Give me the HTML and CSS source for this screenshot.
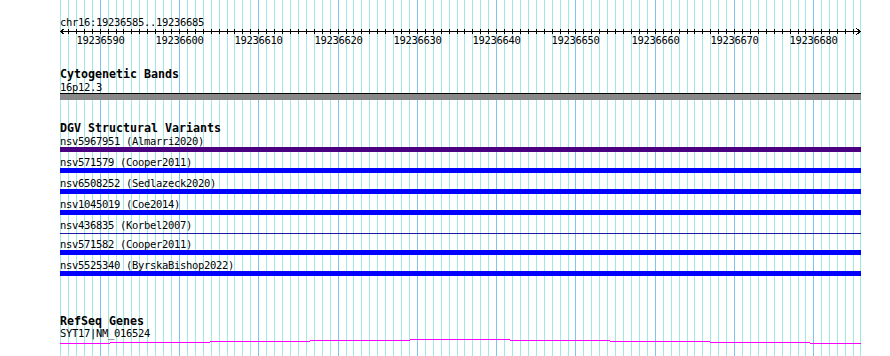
FILE: index.html
```html
<!DOCTYPE html>
<html lang="en">
<head>
    <meta charset="UTF-8">
    <meta name="viewport" content="width=device-width, initial-scale=1.0">
    <title>chr16:19236585..19236685</title>
    <link rel="stylesheet" href="styles.css">
</head>
<body>
    <div class="browser">
        <!-- base grid, filled in by script.js -->
        <svg class="grid" id="grid" width="801" height="356"></svg>

        <div class="tracks">
            <!-- Ruler -->
            <div class="ruler">
                <div class="label">chr16:19236585..19236685</div>
                <svg class="axis" id="axis" width="801" height="20"></svg>
            </div>

            <!-- Cytogenetic Bands -->
            <div class="track cyto">
                <div class="track-title">Cytogenetic Bands</div>
                <div class="label">16p12.3</div>
                <div class="band"></div>
            </div>

            <!-- DGV Structural Variants -->
            <div class="track dgv">
                <div class="track-title">DGV Structural Variants</div>
                <div class="feature">
                    <div class="label">nsv5967951 (Almarri2020)</div>
                    <div class="bar purple"></div>
                </div>
                <div class="feature">
                    <div class="label">nsv571579 (Cooper2011)</div>
                    <div class="bar"></div>
                </div>
                <div class="feature">
                    <div class="label">nsv6508252 (Sedlazeck2020)</div>
                    <div class="bar"></div>
                </div>
                <div class="feature">
                    <div class="label">nsv1045019 (Coe2014)</div>
                    <div class="bar"></div>
                </div>
                <div class="feature">
                    <div class="label">nsv436835 (Korbel2007)</div>
                    <div class="bar thin"></div>
                </div>
                <div class="feature">
                    <div class="label">nsv571582 (Cooper2011)</div>
                    <div class="bar"></div>
                </div>
                <div class="feature">
                    <div class="label">nsv5525340 (ByrskaBishop2022)</div>
                    <div class="bar"></div>
                </div>
            </div>

            <!-- RefSeq Genes -->
            <div class="track refseq">
                <div class="track-title">RefSeq Genes</div>
                <div class="label gene-label">SYT17|NM_016524</div>
                <svg class="gene" width="801" height="15" shape-rendering="crispEdges">
                    <rect x="0" y="4" width="50" height="1" />
                    <rect x="50" y="3" width="100" height="1" />
                    <rect x="150" y="2" width="100" height="1" />
                    <rect x="250" y="1" width="100" height="1" />
                    <rect x="350" y="0" width="100" height="1" />
                    <rect x="450" y="1" width="100" height="1" />
                    <rect x="550" y="2" width="100" height="1" />
                    <rect x="650" y="3" width="100" height="1" />
                    <rect x="750" y="4" width="51" height="1" />
                </svg>
            </div>
        </div>
    </div>

    <script src="script.js"></script>
</body>
</html>
```

FILE: styles.css
```css
body {
    margin: 0;
    padding: 0;
    background: #ffffff;
    font-family: "DejaVu Sans Mono", "Liberation Mono", monospace;
    color: #000;
}

.browser {
    position: relative;
    width: 890px;
    height: 356px;
    overflow: hidden;
}

/* grid sits behind every track */
.grid {
    position: absolute;
    top: 0;
    left: 60px;
}

.grid .minor {
    fill: #9ee8e8;
}

.grid .major {
    fill: #7cc4f2;
}

.tracks {
    position: relative;
    width: 801px;
    padding-left: 60px;
}

/* 6px cells like the small bitmap font */
.label {
    font-size: 10.5px;
    letter-spacing: -0.32px;
    line-height: 12px;
    height: 12px;
    white-space: pre;
}

/* 7px cells like the medium bold font */
.track-title {
    font-size: 11.63px;
    font-weight: bold;
    line-height: 13px;
    height: 13px;
}

/* Ruler */
.ruler {
    padding-top: 16px;
}

.axis {
    display: block;
}

.axis .line,
.axis .tick {
    fill: #000;
}

.axis .arrow {
    fill: none;
    stroke: #000;
    stroke-width: 1;
}

.axis text {
    font-family: "DejaVu Sans Mono", monospace;
    font-size: 10.5px;
    letter-spacing: -0.32px;
    fill: #000;
}

/* Cytogenetic Bands */
.cyto {
    margin-top: 20px;
}

.band {
    height: 6px;
    border-top: 1px solid #000;
    background: #888888;
}

/* DGV Structural Variants */
.dgv {
    margin-top: 22px;
}

.feature + .feature {
    margin-top: 4px;
}

.bar {
    height: 5px;
    background: #0000ff;
}

.bar.purple {
    background: #4b0082;
}

.bar.thin {
    height: 1px;
    margin: 2px 0;
    background: #1a1aa6;
}

/* RefSeq Genes */
.refseq {
    margin-top: 39px;
}

.gene-label {
    line-height: 11px;
    height: 11px;
}

.gene {
    display: block;
    fill: #ff00ff;
}
```

FILE: script.js
```js
// base grid + ruler for chr16:19236585..19236685
const START = 19236585;
const BASES = 101;
const WIDTH = 801;
const SVG_NS = 'http://www.w3.org/2000/svg';
const step = WIDTH / BASES;

function el(name, attrs, text) {
    const node = document.createElementNS(SVG_NS, name);
    for (const key in attrs) node.setAttribute(key, attrs[key]);
    if (text) node.textContent = text;
    return node;
}

function xAt(k) {
    return Math.min(Math.round(k * step), WIDTH - 1);
}

// vertical lines, darker every 10 bases
const grid = document.getElementById('grid');
for (let k = 0; k <= BASES; k++) {
    const major = (START + k) % 10 === 0;
    grid.appendChild(el('rect', {
        x: xAt(k), y: 0, width: 1, height: 356,
        class: major ? 'major' : 'minor'
    }));
}

// axis line, ticks, arrows and labels
const axis = document.getElementById('axis');
axis.setAttribute('shape-rendering', 'crispEdges');
axis.appendChild(el('rect', { x: 0, y: 3, width: WIDTH, height: 1, class: 'line' }));

for (let k = 1; k < BASES; k++) {
    axis.appendChild(el('rect', { x: xAt(k), y: 1, width: 1, height: 5, class: 'tick' }));
    if ((START + k) % 10 === 0) {
        axis.appendChild(el('text', {
            x: xAt(k) + 0.5, y: 16, 'text-anchor': 'middle'
        }, String(START + k)));
    }
}

axis.appendChild(el('path', { d: 'M4.5 0.5L0.5 3.5L4.5 6.5', class: 'arrow' }));
axis.appendChild(el('path', { d: 'M796.5 0.5L800.5 3.5L796.5 6.5', class: 'arrow' }));
```
